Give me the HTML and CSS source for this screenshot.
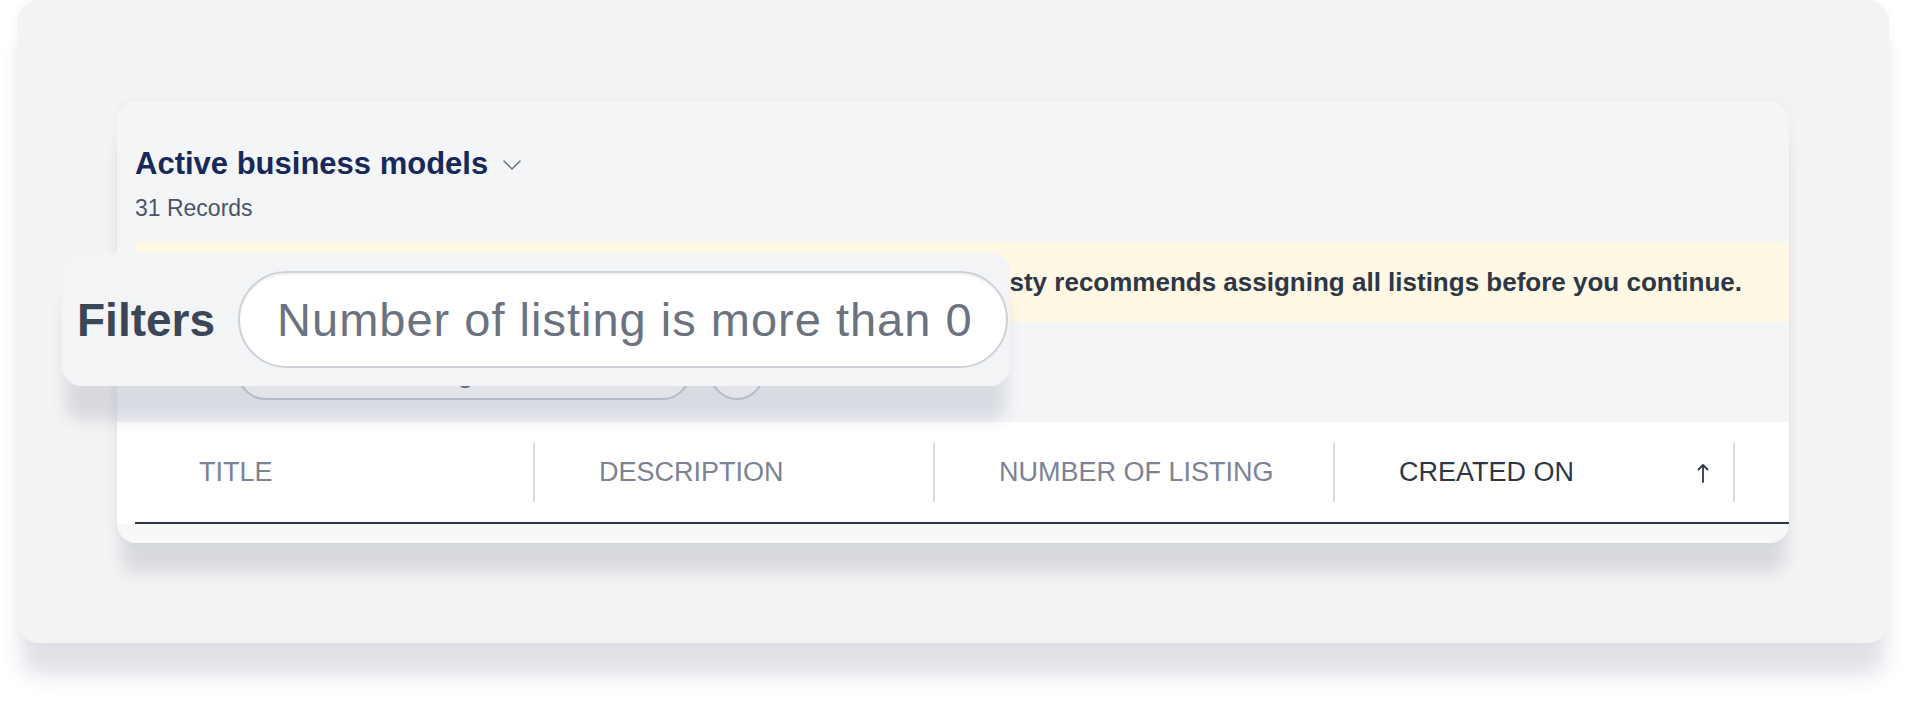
FILE: index.html
```html
<!DOCTYPE html>
<html lang="en">
<head>
<meta charset="utf-8">
<title>Active business models</title>
<link rel="stylesheet" href="styles.css">
</head>
<body>
<div class="stage">
  <div class="outer">
    <section class="card">
      <header class="card-head">
        <div class="title-row">
          <h1 class="title">Active business models</h1>
          <svg class="chev" width="18" height="10" viewBox="0 0 18 10"><path d="M1 1l8 8 8-8" fill="none" stroke="#6b7280" stroke-width="1.5" stroke-linecap="round" stroke-linejoin="round"/></svg>
        </div>
        <div class="records">31 Records</div>
      </header>

      <div class="banner">
        <p class="banner-text">12 listings aren't assigned to a business model. Guesty recommends assigning all listings before you continue.</p>
      </div>

      <div class="filter-row">
        <span class="filter-label">Filters</span>
        <span class="chip">Number of listing is more than 0</span>
        <span class="chip-btn">+</span>
      </div>

      <div class="thead">
        <div class="thead-row">
          <div class="th"><span class="th-label">TITLE</span><i class="th-div"></i></div>
          <div class="th"><span class="th-label">DESCRIPTION</span><i class="th-div"></i></div>
          <div class="th"><span class="th-label">NUMBER OF LISTING</span><i class="th-div"></i></div>
          <div class="th th-active"><span class="th-label">CREATED ON</span>
            <svg class="sort" width="12" height="20" viewBox="0 0 12 20"><path d="M6 19V2M1.5 6.5L6 2l4.5 4.5" fill="none" stroke="#2d3748" stroke-width="1.8" stroke-linecap="round" stroke-linejoin="round"/></svg>
            <i class="th-div"></i></div>
        </div>
      </div>
      <div class="tbody"></div>
    </section>

    <div class="callout">
      <span class="callout-label">Filters</span>
      <span class="callout-pill">Number of listing is more than 0</span>
    </div>
  </div>
</div>
</body>
</html>
```

FILE: styles.css
```css
* { box-sizing: border-box; }

html, body {
  margin: 0;
  padding: 0;
  background: #ffffff;
  font-family: "Liberation Sans", Arial, sans-serif;
}

body {
  width: 1906px;
  height: 703px;
  overflow: hidden;
}

.stage {
  padding: 0 17px;
}

.outer {
  position: relative;
  height: 643px;
  padding: 101px 100px 0 100px;
  background: #f3f3f3;
  border-radius: 22px;
  box-shadow: 0 36px 20px -4px rgba(60, 72, 110, 0.16), 0 0 10px rgba(60, 72, 110, 0.04);
}

.card {
  height: 442px;
  display: flex;
  flex-direction: column;
  background: #f4f5f7;
  border-radius: 20px;
  overflow: hidden;
  box-shadow: 0 34px 16px -4px rgba(60, 72, 110, 0.14), 0 0 10px rgba(60, 72, 110, 0.05);
}

.card-head {
  padding: 45px 0 0 18px;
}

.title-row {
  display: flex;
  align-items: center;
  height: 36px;
}

.title {
  margin: 0;
  font-size: 31px;
  line-height: 36px;
  font-weight: 700;
  color: #16295a;
}

.chev {
  margin-left: 15px;
  margin-top: 1px;
}

.records {
  margin-top: 13px;
  font-size: 23px;
  line-height: 26px;
  color: #4a5568;
}

.banner {
  margin: 21px 0 0 18px;
  height: 80px;
  display: flex;
  align-items: center;
  justify-content: flex-end;
  padding-right: 47px;
  background: #fef8e4;
  overflow: hidden;
}

.banner-text {
  margin: 0;
  white-space: nowrap;
  font-size: 26px;
  font-weight: 700;
  color: #2d3748;
}

.filter-row {
  margin: 24px 0 0 18px;
  height: 54px;
  display: flex;
  align-items: center;
}

.filter-label {
  font-size: 28px;
  font-weight: 700;
  color: #374151;
}

.chip {
  margin-left: 19px;
  width: 452px;
  height: 54px;
  display: flex;
  align-items: center;
  padding-left: 23px;
  border: 2px solid #c9ced6;
  border-radius: 27px;
  background: #ffffff;
  font-size: 28px;
  color: #6b7280;
}

.chip-btn {
  margin-left: 20px;
  width: 54px;
  height: 54px;
  display: flex;
  align-items: center;
  justify-content: center;
  border: 2px solid #c9ced6;
  border-radius: 50%;
  background: #ffffff;
  font-size: 28px;
  color: #6b7280;
}

.thead {
  margin-top: 22px;
  padding-left: 18px;
  background: #ffffff;
}

.thead-row {
  display: flex;
  height: 102px;
  border-bottom: 2px solid #2d3748;
}

.th {
  width: 400px;
  flex: none;
  display: flex;
  align-items: center;
  padding-left: 64px;
  font-size: 27px;
  color: #7b8395;
}

.th-label {
  white-space: nowrap;
}

.th-active {
  color: #2d3748;
}

.sort {
  margin-left: auto;
  margin-top: 2px;
}

.th-div {
  display: block;
  margin-left: auto;
  width: 2px;
  height: 59px;
  background: #d8dce2;
}

.th-active .th-div {
  margin-left: 24px;
}

.tbody {
  flex: 1;
  background: #f8f8f9;
}

.callout {
  position: absolute;
  left: 45px;
  top: 253px;
  width: 948px;
  height: 133px;
  display: flex;
  align-items: center;
  padding-left: 15px;
  background: #f3f4f6;
  border-radius: 20px;
  box-shadow: 0 38px 16px -4px rgba(60, 72, 110, 0.15);
}

.callout-label {
  font-size: 46px;
  font-weight: 700;
  color: #3b4657;
}

.callout-pill {
  margin-left: 23px;
  width: 770px;
  height: 97px;
  display: flex;
  align-items: center;
  padding-left: 37px;
  border: 2px solid #cdd2d9;
  border-radius: 49px;
  background: #ffffff;
  box-shadow: inset 0 2px 2px rgba(0, 0, 0, 0.05);
  font-size: 47px;
  letter-spacing: 1px;
  color: #6b7280;
  white-space: nowrap;
}
```
